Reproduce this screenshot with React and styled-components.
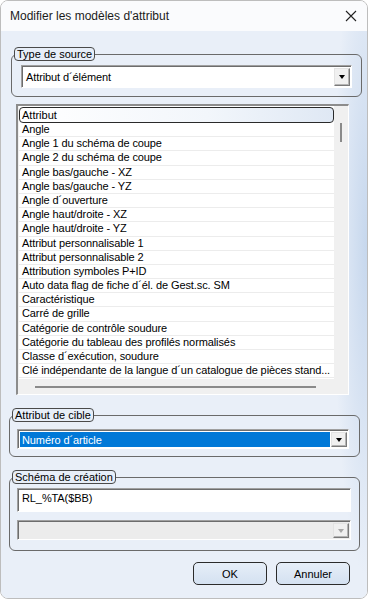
import React from 'react'
import styled, { createGlobalStyle } from 'styled-components'

const Global = createGlobalStyle`
html, body {
  margin: 0;
  padding: 0;
  background: #ffffff;
}
* { box-sizing: border-box; }
`

const Window = styled.div`
width: 368px;
height: 599px;
border: 1px solid #bdbdbd;
border-radius: 8px;
overflow: hidden;
display: flex;
flex-direction: column;
font-family: "Liberation Sans", Arial, sans-serif;
font-size: 11px;
color: #000;
`

const TitleBar = styled.div`
height: 30px;
flex: none;
display: flex;
align-items: center;
justify-content: space-between;
padding: 0 10px 0 9px;
background: #fafbfd;
font-size: 12px;
color: #1b1b1b;
`

const Body = styled.div`
flex: 1;
display: flex;
flex-direction: column;
padding: 16px 0 0 0;
background:
  radial-gradient(ellipse 34px 330px at 100% 38%, #c6d7ed 0%, rgba(233, 239, 248, 0) 100%),
  #e9eff8;
`

const Group = styled.fieldset`
margin: ${p => p.$mt || 0}px ${p => p.$mr}px 0 ${p => p.$ml}px;
padding: 0;
border: 1px solid #6a6a6a;
border-radius: 6px;
min-width: 0;
`

const Legend = styled.legend`
margin-left: 2px;
padding: 0 2px;
height: 14px;
line-height: 12px;
border: 1px solid #4a4a4a;
border-radius: 4px;
background: #e7eef8;
font-size: 11px;
`

const GroupContent = styled.div`
display: flex;
flex-direction: column;
gap: ${p => p.$gap || 0}px;
padding: ${p => p.$pad};
`

const Combo = styled.div`
display: flex;
height: ${p => p.$h}px;
border: 1px solid;
border-color: #a0a0a0 #ffffff #ffffff #a0a0a0;
box-shadow: inset 1px 1px 0 #6d6d6d;
background: ${p => (p.$disabled ? '#ececec' : '#ffffff')};
padding: 2px 1px 1px 2px;
`

const ComboField = styled.div`
flex: 1;
display: flex;
align-items: center;
padding-left: 2px;
letter-spacing: -0.1px;
background: ${p => (p.$selected ? '#0078d7' : 'transparent')};
color: ${p => (p.$selected ? '#ffffff' : '#000000')};
margin-right: 1px;
`

const DropButton = styled.div`
width: 16px;
flex: none;
display: flex;
align-items: center;
justify-content: center;
background: #f0f0f0;
border: 1px solid;
border-color: #e3e3e3 #7a7a7a #7a7a7a #e3e3e3;
box-shadow: inset -1px -1px 0 #b4b4b4;
`

const Arrow = styled.div`
width: 0;
height: 0;
border-left: 3.5px solid transparent;
border-right: 3.5px solid transparent;
border-top: 4px solid ${p => (p.$disabled ? '#a8a8a8' : '#000000')};
`

const TextInput = styled.div`
height: 24px;
border: 1px solid;
border-color: #a0a0a0 #ffffff #ffffff #a0a0a0;
box-shadow: inset 1px 1px 0 #6d6d6d;
background: #ffffff;
padding: 3px 0 0 4px;
letter-spacing: -0.1px;
`

const ListBox = styled.div`
margin: 7px 18px 0 15px;
height: 291px;
display: grid;
grid-template-columns: 315px 1fr;
grid-template-rows: 1fr 15px;
border-style: solid;
border-width: 2px 1px 1px 2px;
border-color: #8c8c8c #ffffff #ffffff #8c8c8c;
background: #f0f0f0;
padding-left: 1px;
`

const ListMain = styled.div`
background: #ffffff;
padding-top: 1px;
display: flex;
flex-direction: column;
`

const Header = styled.div`
height: 16px;
flex: none;
border: 1px solid #2a2a2a;
border-radius: 4px;
background: linear-gradient(to right, #ffffff 0%, #f2f6fb 60%, #dfe8f4 100%);
padding-left: 2px;
line-height: 14px;
`

const Row = styled.div`
height: 14.2px;
flex: none;
line-height: 13px;
border-bottom: 1px solid #ececec;
padding-left: 3px;
white-space: nowrap;
overflow: hidden;
letter-spacing: -0.1px;
`

const VTrack = styled.div`
display: flex;
justify-content: center;
padding-top: 17px;
`

const VThumb = styled.div`
width: 2px;
height: 19px;
background: #8a8a8a;
`

const HTrack = styled.div`
display: flex;
align-items: center;
padding: 0 18px 0 16px;
`

const HThumb = styled.div`
flex: 1;
height: 2px;
background: #8a8a8a;
`

const Footer = styled.div`
display: flex;
justify-content: flex-end;
gap: 9px;
margin: 11px 17px 0 0;
`

const Button = styled.div`
width: 74px;
height: 23px;
display: flex;
align-items: center;
justify-content: center;
border: 1px solid #2b2b2b;
border-radius: 5px;
background: linear-gradient(to bottom, #e6eef8 0%, #d4e1f1 100%);
font-size: 11px;
`

const rows = [
  'Angle',
  'Angle 1 du schéma de coupe',
  'Angle 2 du schéma de coupe',
  'Angle bas/gauche - XZ',
  'Angle bas/gauche - YZ',
  'Angle d´ouverture',
  'Angle haut/droite - XZ',
  'Angle haut/droite - YZ',
  'Attribut personnalisable 1',
  'Attribut personnalisable 2',
  'Attribution symboles P+ID',
  'Auto data flag de fiche d´él. de Gest.sc. SM',
  'Caractéristique',
  'Carré de grille',
  'Catégorie de contrôle soudure',
  'Catégorie du tableau des profilés normalisés',
  'Classe d´exécution, soudure',
  'Clé indépendante de la langue d´un catalogue de pièces stand...',
]

const CloseIcon = () => (
  <svg width="12" height="12" viewBox="0 0 12 12">
    <path d="M1 1 L11 11 M11 1 L1 11" stroke="#222" strokeWidth="1.1" fill="none" />
  </svg>
)

const App = () => {
  return (
    <>
      <Global />
      <Window>
        <TitleBar>
          <span>Modifier les modèles d'attribut</span>
          <CloseIcon />
        </TitleBar>
        <Body>
          <Group $ml={10} $mr={5}>
            <Legend>Type de source</Legend>
            <GroupContent $pad="4px 9px 8px 9px">
              <Combo $h={23}>
                <ComboField>Attribut d´élément</ComboField>
                <DropButton><Arrow /></DropButton>
              </Combo>
            </GroupContent>
          </Group>

          <ListBox>
            <ListMain>
              <Header>Attribut</Header>
              {rows.map(r => (
                <Row key={r}>{r}</Row>
              ))}
            </ListMain>
            <VTrack><VThumb /></VTrack>
            <HTrack><HThumb /></HTrack>
            <div />
          </ListBox>

          <Group $ml={8} $mr={7} $mt={13}>
            <Legend>Attribut de cible</Legend>
            <GroupContent $pad="7px 10px 7px 7px">
              <Combo $h={20}>
                <ComboField $selected>Numéro d´article</ComboField>
                <DropButton><Arrow /></DropButton>
              </Combo>
            </GroupContent>
          </Group>

          <Group $ml={8} $mr={7} $mt={13}>
            <Legend>Schéma de création</Legend>
            <GroupContent $pad="4px 8px 10px 7px" $gap={8}>
              <TextInput>RL_%TA($BB)</TextInput>
              <Combo $h={20} $disabled>
                <ComboField />
                <DropButton><Arrow $disabled /></DropButton>
              </Combo>
            </GroupContent>
          </Group>

          <Footer>
            <Button>OK</Button>
            <Button>Annuler</Button>
          </Footer>
        </Body>
      </Window>
    </>
  )
}

export default App
